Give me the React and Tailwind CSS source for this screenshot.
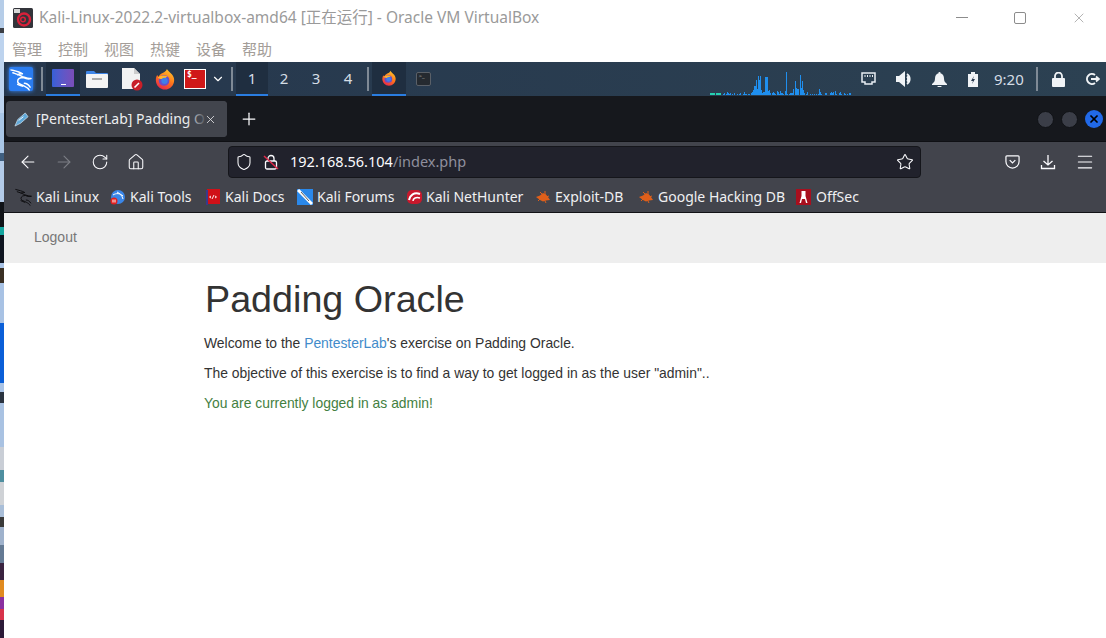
import React from "react";
import { ArrowLeft, ArrowRight, RotateCw, Home, Shield, Star, Menu, X, Plus, ChevronDown } from "lucide-react";

const teal = '#25d0b0';
const bars = [
  [5,2,teal],[6,2,teal],[7,2,teal],[8,2,teal],[9,2,teal],[11,2,teal],[12,2,teal],[13,2,teal],[14,2,teal],[15,2,teal],
  [18,1],[19,2],[21,1],[22,3],[23,2],[24,1],[25,2],[27,1],[29,2],[32,1],[34,1],[35,2],[38,1],[39,3],[40,1],[41,1],[43,1],[44,1],[46,2],[47,3],[48,5],[49,9],[50,9],[51,15],[52,6],[53,19],[54,15],[55,19],[56,5],[57,2],[58,3],[59,3],[60,18],[61,18],[62,18],[63,4],[64,5],[65,2],[67,2],[68,3],[69,2],[70,1],[72,4],[73,3],[74,1],[75,4],[76,2],[77,2],[78,1],[80,4],[81,23],[82,1],[84,1],[85,2],[86,2],[87,2],[88,6],[90,14],[91,7],[92,6],[93,6],[95,20],[96,7],[97,14],[98,5],[99,2],[101,1],[102,3],[105,1],[107,1],[109,1],[111,1],[113,1],[114,6],[115,3],[116,1],[120,2],[121,2],[125,2],[126,3],[127,2],[128,3],[130,4],[131,1],[134,2],[135,3],[136,1],[139,2],[140,1],[142,1],[144,2],[145,2],
];

const strip = [
  ['#b6cde8',28],['#3a3d44',5],['#bdd3ee',80],['#a9c6e6',40],['#3f5f80',8],['#b3cbe8',41],['#0f1217',25],['#14a6a0',8],['#0f1520',28],
  ['#a9c3e6',5],['#3a3024',15],['#a8c2e4',40],['#0a5fd8',60],['#a9c3e6',9],['#2a3340',11],['#a9c2e2',44],['#c9ced6',23],['#4f8fa0',12],['#cfd2d6',23],['#a9bed8',12],['#3a3a3a',10],['#9fb2cc',18],['#647a94',18],['#3a2340',17],['#e08a20',17],['#8a30a0',12],['#d8324a',11],['#2c1a38',18],
];

const Sep = ({ className }) => <div className={`h-[24px] w-[2px] shrink-0 bg-[#7f8a96] ${className}`} />;

function Taskbtn({ active, children, w }) {
  return <div className={`flex h-full shrink-0 items-center justify-center border-b-[2px] ${active ? 'border-[#2a7de1] bg-[#1f2e40]' : 'border-transparent'} ${w}`}>{children}</div>;
}

function Dragon({ className, color = '#fff', width = 1.5 }) {
  return (
    <svg viewBox="0 0 24 24" className={className} fill="none" stroke={color} strokeWidth={width} strokeLinecap="round" strokeLinejoin="round">
      <path d="M1 2c4 1 9 2 12 4-2 0-4 0-5 1" />
      <path d="M3 5c3 1 7 2 10 4 3 1 6 2 9 2-3 1-6 0-8-1-3 0-6 1-6 4 0 3 4 3 7 5 2 1 4 2 5 4" />
      <path d="M15 16c2 0 4 1 6 4M8 17c2 1 3 1 5 2" />
    </svg>
  );
}

function Firefox({ className, id }) {
  return (
    <svg viewBox="0 0 24 24" className={className}>
      <defs>
        <linearGradient id={id} x1="0.8" y1="0" x2="0.3" y2="1">
          <stop offset="0" stopColor="#ffcb2e" />
          <stop offset="0.5" stopColor="#ff7a1a" />
          <stop offset="1" stopColor="#e8264a" />
        </linearGradient>
      </defs>
      <path d="M14 1c1 1.500 2.500 3 4 4.500 2.500 2 4 4.800 4 7.500 0 5.800-4.500 10.500-10 10.500S2 18.800 2 13c0-2 .5-3.800 1.500-5.300.4 1 .9 1.600 1.500 1.800 1.200-3 4-4 6-5 1.500-.8 2.800-2 3-3.500z" fill={`url(#${id})`} />
      <circle cx="11" cy="13.500" r="5.800" fill="#6a4ec8" />
      <path d="M4 10.500c3-2.500 8-3 11-1-2 .3-3 1.500-3.500 2.500-2 .3-5 0-7.500-1.500z" fill="#ffb52e" />
      <circle cx="11.500" cy="14" r="3.500" fill="#3f7fe8" />
    </svg>
  );
}

function Bug() {
  return (
    <svg viewBox="0 0 16 12" className="h-[12px] w-[16px] shrink-0">
      <path d="M1 6l4-1.500L8 2l3 1.500 2 2.500 2 3-4 .5-3 1-3-1.500z" fill="#df5f1a" />
      <path d="M5 1l3 3M10 0l0 4M3 10l3-3M11 12l-2-4M14 5l-3 1" stroke="#df5f1a" strokeWidth="1" />
    </svg>
  );
}

function Bookmark({ icon, label, cls }) {
  return (
    <div className={`flex shrink-0 items-center whitespace-nowrap ${cls}`}>
      {icon}
      <span>{label}</span>
    </div>
  );
}

export default function App() {
  return (
    <div className="flex h-[638px] w-[1106px] overflow-hidden bg-white font-['Noto_Sans','Noto_Sans_CJK_SC',sans-serif]">
      <div className="flex h-full w-[4px] shrink-0 flex-col">
        {strip.map(([c, h], i) => <div key={i} style={{ background: c, height: h }} />)}
      </div>
      <div className="flex min-w-0 flex-1 flex-col">
        {/* VirtualBox title */}
        <div className="flex h-[35px] shrink-0 items-center pl-[9px] pr-[19px]">
          <svg viewBox="0 0 20 20" className="h-[20px] w-[20px] shrink-0">
            <rect width="20" height="20" rx="1.500" fill="#33343a" />
            <rect x="1" y="1" width="6" height="4" fill="#d8d8d8" />
            <circle cx="11" cy="11.500" r="6" fill="none" stroke="#d8203a" strokeWidth="2.400" />
            <circle cx="10" cy="11.500" r="2.300" fill="none" stroke="#d8203a" strokeWidth="1.500" />
          </svg>
          <span className="ml-[6px] whitespace-nowrap text-[15.500px] leading-none text-[#9a9a9a]">Kali-Linux-2022.2-virtualbox-amd64 [正在运行] - Oracle VM VirtualBox</span>
          <div className="ml-auto h-[1px] w-[12px] shrink-0 bg-[#8c8c8c]" />
          <div className="ml-[46px] h-[12px] w-[12px] shrink-0 rounded-[2px] border border-[#8c8c8c]" />
          <X className="ml-[45px] h-[16px] w-[16px] shrink-0 text-[#8c8c8c]" strokeWidth={1} />
        </div>
        <div className="flex h-[27px] shrink-0 items-start gap-[16px] pl-[8px] pt-[4px] text-[15px] leading-[20px] text-[#a39d98]">
          {['管理', '控制', '视图', '热键', '设备', '帮助'].map(t => <span key={t}>{t}</span>)}
        </div>

        {/* Kali panel */}
        <div className="flex h-[34px] shrink-0 items-center bg-[linear-gradient(90deg,#26374d,#2c4152)] text-[#d5dde5]">
          <div className="ml-[5px] flex h-[24px] w-[24px] shrink-0 items-center justify-center rounded-[2px] bg-[#2a7cf0] shadow-[0_0_4px_#3a8cff]"><Dragon className="h-[23px] w-[23px]" /></div>
          <Sep className="ml-[8px]" />
          <div className="ml-[3px] flex h-full">
            <Taskbtn active w="w-[34px]">
              <div className="flex h-[18px] w-[22px] items-end justify-center rounded-[1px] bg-gradient-to-r from-[#3560d8] to-[#7a4db8]"><div className="mb-[2px] h-[1px] w-[5px] bg-white" /></div>
            </Taskbtn>
          </div>
          <div className="flex w-[34px] shrink-0 justify-center">
            <svg viewBox="0 0 22 18" className="h-[18px] w-[22px]"><path d="M0 2a1 1 0 011-1h7l2 2h11a1 1 0 011 1v3H0z" fill="#3f86e8" /><rect y="4" width="22" height="14" rx="1" fill="#f4f4f4" /><rect x="6" y="8" width="10" height="2" fill="#aaa" /></svg>
          </div>
          <div className="flex w-[36px] shrink-0 justify-center">
            <svg viewBox="0 0 22 24" className="h-[24px] w-[22px]"><path d="M1 1h12l6 6v15H1z" fill="#f2f2f2" /><path d="M13 1v6h6z" fill="#ccc" /><circle cx="16" cy="18" r="5.500" fill="#c81f28" /><path d="M13.500 20.500l4.500-4.500" stroke="#fff" strokeWidth="1.600" /></svg>
          </div>
          <div className="flex w-[30px] shrink-0 justify-center"><Firefox id="ffa" className="h-[22px] w-[22px]" /></div>
          <div className="flex w-[30px] shrink-0 justify-center">
            <div className="h-[20px] w-[22px] border border-white bg-[#d01818] pl-[2px] font-['DejaVu_Sans_Mono',monospace] text-[8px] font-bold leading-[10px] text-white">$_</div>
          </div>
          <div className="flex w-[16px] shrink-0 justify-center"><ChevronDown className="h-[14px] w-[14px] text-white" strokeWidth={2} /></div>
          <Sep className="ml-[5px]" />
          <div className="ml-[3px] flex h-full text-[15px]">
            <Taskbtn active w="w-[32px]">1</Taskbtn>
            <Taskbtn w="w-[32px]">2</Taskbtn>
            <Taskbtn w="w-[32px]">3</Taskbtn>
            <Taskbtn w="w-[32px]">4</Taskbtn>
          </div>
          <Sep className="ml-[3px]" />
          <div className="ml-[3px] flex h-full">
            <Taskbtn active w="w-[34px]"><Firefox id="ffb" className="h-[16px] w-[16px]" /></Taskbtn>
          </div>
          <div className="flex w-[34px] shrink-0 justify-center">
            <div className="h-[14px] w-[15px] rounded-[2px] border border-[#5a6068] bg-[#252a30] pl-[2px] text-[6px] leading-[7px] text-[#aaa]">&gt;_</div>
          </div>
          <svg viewBox="0 0 150 26" className="mb-[1px] ml-[265px] h-[26px] w-[150px] shrink-0 self-end">
            {bars.map(([x, h, c]) => <rect key={x} x={x} y={26 - h} width="1" height={h} fill={c || '#1f8fef'} />)}
          </svg>
          <svg viewBox="0 0 15 14" className="ml-[6px] h-[14px] w-[15px] shrink-0" fill="none" stroke="#e8edf2" strokeWidth="1.500"><path d="M1 1h13v9h-3v2H4v-2H1z" /><path d="M4 3v2M6.500 3v2M9 3v2M11.500 3v2" strokeWidth="1" /></svg>
          <svg viewBox="0 0 17 16" className="ml-[20px] h-[16px] w-[17px] shrink-0"><path d="M0 5h3l6-5v16l-6-5H0z" fill="#f0f3f6" /><path d="M11 3a6 6 0 010 10M11 5.500a3.500 3.500 0 010 5" fill="none" stroke="#f0f3f6" strokeWidth="1.800" /></svg>
          <svg viewBox="0 0 15 15" className="ml-[19px] h-[15px] w-[15px] shrink-0" fill="#f0f3f6"><path d="M7.500 0a1 1 0 011 1.200C11 2 12 4 12 6.500c0 2.500 1 4 3 5.500v1H0v-1c2-1.500 3-3 3-5.500C3 4 4 2 6.500 1.200A1 1 0 017.500 0z" /><path d="M5.500 14h4a2 2 0 01-4 0z" /></svg>
          <svg viewBox="0 0 10 15" className="ml-[21px] h-[15px] w-[10px] shrink-0"><path d="M3 0h4v2h3v13H0V2h3z" fill="#f0f3f6" /><path d="M6 4L3 9h2l-1 3 3-5H5z" fill="#26374d" /></svg>
          <span className="ml-[16px] w-[30px] shrink-0 whitespace-nowrap text-[15px] leading-none">9:20</span>
          <div className="ml-[12px] h-[24px] w-[2px] shrink-0 bg-[#7f8a96]" />
          <svg viewBox="0 0 13 15" className="ml-[14px] h-[15px] w-[13px] shrink-0"><path d="M3 7V4a3.500 3.500 0 017 0v3" fill="none" stroke="#f0f3f6" strokeWidth="1.800" /><rect y="6" width="13" height="9" rx="1" fill="#f0f3f6" /></svg>
          <svg viewBox="0 0 15 14" className="ml-[20px] h-[14px] w-[15px] shrink-0" fill="none" stroke="#f0f3f6" strokeWidth="2"><path d="M10 3a5 5 0 100 8" /><path d="M6 7h8M11 4.500L14 7l-3 2.500" strokeWidth="1.800" /></svg>
        </div>

        {/* Firefox tab strip */}
        <div className="flex h-[45px] shrink-0 items-center bg-[#16181d] pb-[2px] pt-[3px] text-[#fbfbfe]">
          <div className="relative ml-[2px] flex h-[36px] w-[221px] shrink-0 items-center overflow-hidden rounded-[4px] bg-[#42454d]">
            <svg viewBox="0 0 16 16" className="ml-[8px] h-[15px] w-[15px] shrink-0"><path d="M1 15l3-7 8-7 3 4-8 7z" fill="#5fa8d8" stroke="#c8dbe8" strokeWidth="0.800" /><path d="M5 9l5-4" stroke="#fff" strokeWidth="1" /></svg>
            <span className="ml-[7px] whitespace-nowrap text-[14px] leading-none text-[#eceef0]">[PentesterLab] Padding O</span>
            <div className="absolute right-0 top-0 flex h-full w-[40px] items-center justify-end bg-[linear-gradient(90deg,rgba(66,69,77,0)_0%,#42454d_50%)] pr-[10px]">
              <X className="h-[13px] w-[13px] text-[#e8e8ea]" strokeWidth={1.500} />
            </div>
          </div>
          <Plus className="ml-[12px] h-[20px] w-[20px] shrink-0" strokeWidth={1.500} />
          <div className="ml-auto mr-[3px] flex items-center gap-[7px]">
            <div className="h-[17px] w-[17px] rounded-full border border-[#101216] bg-[#3b3e48]" />
            <div className="h-[17px] w-[17px] rounded-full border border-[#101216] bg-[#3b3e48]" />
            <div className="flex h-[18px] w-[18px] items-center justify-center rounded-full bg-[#2169e8]"><X className="h-[12px] w-[12px] text-black" strokeWidth={3.500} /></div>
          </div>
        </div>

        {/* Firefox nav bar */}
        <div className="flex h-[40px] shrink-0 items-center border-t border-[#0f1014] bg-[#42444c] text-[#fbfbfe]">
          <ArrowLeft className="ml-[14px] h-[20px] w-[20px] shrink-0" strokeWidth={1.300} />
          <ArrowRight className="ml-[16px] h-[20px] w-[20px] shrink-0 text-[#7c7e85]" strokeWidth={1.300} />
          <RotateCw className="ml-[17px] h-[18px] w-[18px] shrink-0" strokeWidth={1.400} />
          <Home className="ml-[18px] h-[18px] w-[18px] shrink-0" strokeWidth={1.400} />
          <div className="ml-[83px] flex h-[32px] w-[693px] shrink-0 items-center rounded-[4px] border border-[#15161b] bg-[#21222c] pr-[6px]">
            <Shield className="ml-[6px] h-[18px] w-[18px] shrink-0" strokeWidth={1.400} />
            <svg viewBox="0 0 16 16" className="ml-[10px] h-[16px] w-[16px] shrink-0" fill="none"><path d="M5 7V4.500a3 3 0 016 0V7" stroke="#fbfbfe" strokeWidth="1.300" /><rect x="2.500" y="7" width="11" height="8" rx="1.500" stroke="#fbfbfe" strokeWidth="1.300" /><path d="M1 2l14 13" stroke="#e0294a" strokeWidth="1.500" /></svg>
            <span className="ml-[11px] whitespace-nowrap text-[14.500px] leading-none"><span className="text-[#fbfbfe]">192.168.56.104</span><span className="text-[#8f8f9d]">/index.php</span></span>
            <Star className="ml-auto h-[18px] w-[18px] shrink-0" strokeWidth={1.400} />
          </div>
          <svg viewBox="0 0 16 16" className="ml-[84px] h-[15px] w-[15px] shrink-0" fill="none" stroke="#fbfbfe" strokeWidth="1.300"><path d="M2 2h12a1 1 0 011 1v5a7 7 0 01-14 0V3a1 1 0 011-1z" /><path d="M5 6.500L8 9.500l3-3" /></svg>
          <svg viewBox="0 0 16 16" className="ml-[20px] h-[16px] w-[16px] shrink-0" fill="none" stroke="#fbfbfe" strokeWidth="1.300"><path d="M8 1v10M3.500 7L8 11l4.500-4M1.500 11v3.500h13V11" /></svg>
          <Menu className="ml-[19px] h-[20px] w-[20px] shrink-0" strokeWidth={1.300} />
        </div>

        {/* Bookmarks */}
        <div className="flex h-[32px] shrink-0 items-center border-b border-[#111216] bg-[#42444c] pl-[11px] text-[14px] leading-none text-[#f0f0f2]">
          <Bookmark cls="w-[95px] gap-[3px]" icon={<Dragon className="h-[18px] w-[18px] shrink-0" color="#0c0c0e" width={1.300} />} label="Kali Linux" />
          <Bookmark cls="w-[96px] gap-[5px]" icon={
            <svg viewBox="0 0 15 16" className="h-[16px] w-[15px] shrink-0"><circle cx="8" cy="8" r="7" fill="#3a86e8" /><path d="M3 6c3-2 7-2 10 1M7 3c2 1 5 3 6 7" stroke="#fff" strokeWidth="1" fill="none" /><circle cx="4" cy="12" r="3.500" fill="#e02020" /><path d="M3 10.500v3M5 10.500v3" stroke="#fff" strokeWidth="1" /></svg>
          } label="Kali Tools" />
          <Bookmark cls="w-[91px] gap-[5px]" icon={
            <svg viewBox="0 0 14 16" className="h-[16px] w-[14px] shrink-0"><rect x="1" y="0" width="13" height="15" fill="#d01018" /><rect y="1" width="2" height="15" fill="#3a3a8a" /><path d="M5 7L3.500 8 5 9M9 7l1.500 1L9 9M8 6L6 10" stroke="#fff" strokeWidth="0.900" fill="none" /></svg>
          } label="Kali Docs" />
          <Bookmark cls="w-[110px] gap-[4px]" icon={
            <svg viewBox="0 0 16 16" className="h-[16px] w-[16px] shrink-0"><rect width="16" height="16" fill="#2a88ea" /><path d="M1 1l14 14" stroke="#fff" strokeWidth="3" /><path d="M4 3l8 9" stroke="#333" strokeWidth="0.800" /></svg>
          } label="Kali Forums" />
          <Bookmark cls="w-[128px] gap-[4px]" icon={
            <svg viewBox="0 0 15 16" className="h-[16px] w-[15px] shrink-0"><rect y="1" width="15" height="14" rx="5" fill="#c8182c" /><path d="M2 11c1-5 5-8 11-6" stroke="#fff" strokeWidth="2" fill="none" /><path d="M6 12c0-3 3-4 7-3" stroke="#fff" strokeWidth="1.500" fill="none" /></svg>
          } label="Kali NetHunter" />
          <Bookmark cls="w-[103px] gap-[4px]" icon={<Bug />} label="Exploit-DB" />
          <Bookmark cls="w-[158px] gap-[4px]" icon={<Bug />} label="Google Hacking DB" />
          <Bookmark cls="gap-[5px]" icon={
            <svg viewBox="0 0 15 16" className="h-[16px] w-[15px] shrink-0"><rect width="15" height="16" fill="#a80f1e" /><path d="M5.500 2h4v5l2 7H10l-1-4H6l-1 4H3.500l2-7z" fill="#fff" /></svg>
          } label="OffSec" />
        </div>

        {/* Page */}
        <div className="flex h-[50px] shrink-0 items-center bg-[#eeeeee] pb-[1px] pl-[30px] font-['Liberation_Sans',sans-serif] text-[14px] text-[#777777]">Logout</div>
        <div className="flex-1 pl-[200px] pt-[15px] font-['Liberation_Sans',sans-serif] text-[13.900px] leading-[20px] text-[#333333]">
          <h1 className="mb-[13px] ml-[1px] text-[37.700px] leading-[42px]">Padding Oracle</h1>
          <p className="mb-[10px]">Welcome to the <span className="text-[#428bca]">PentesterLab</span>'s exercise on Padding Oracle.</p>
          <p className="mb-[10px]">The objective of this exercise is to find a way to get logged in as the user "admin"..</p>
          <p className="text-[#43803f]">You are currently logged in as admin!</p>
        </div>
      </div>
    </div>
  );
}
